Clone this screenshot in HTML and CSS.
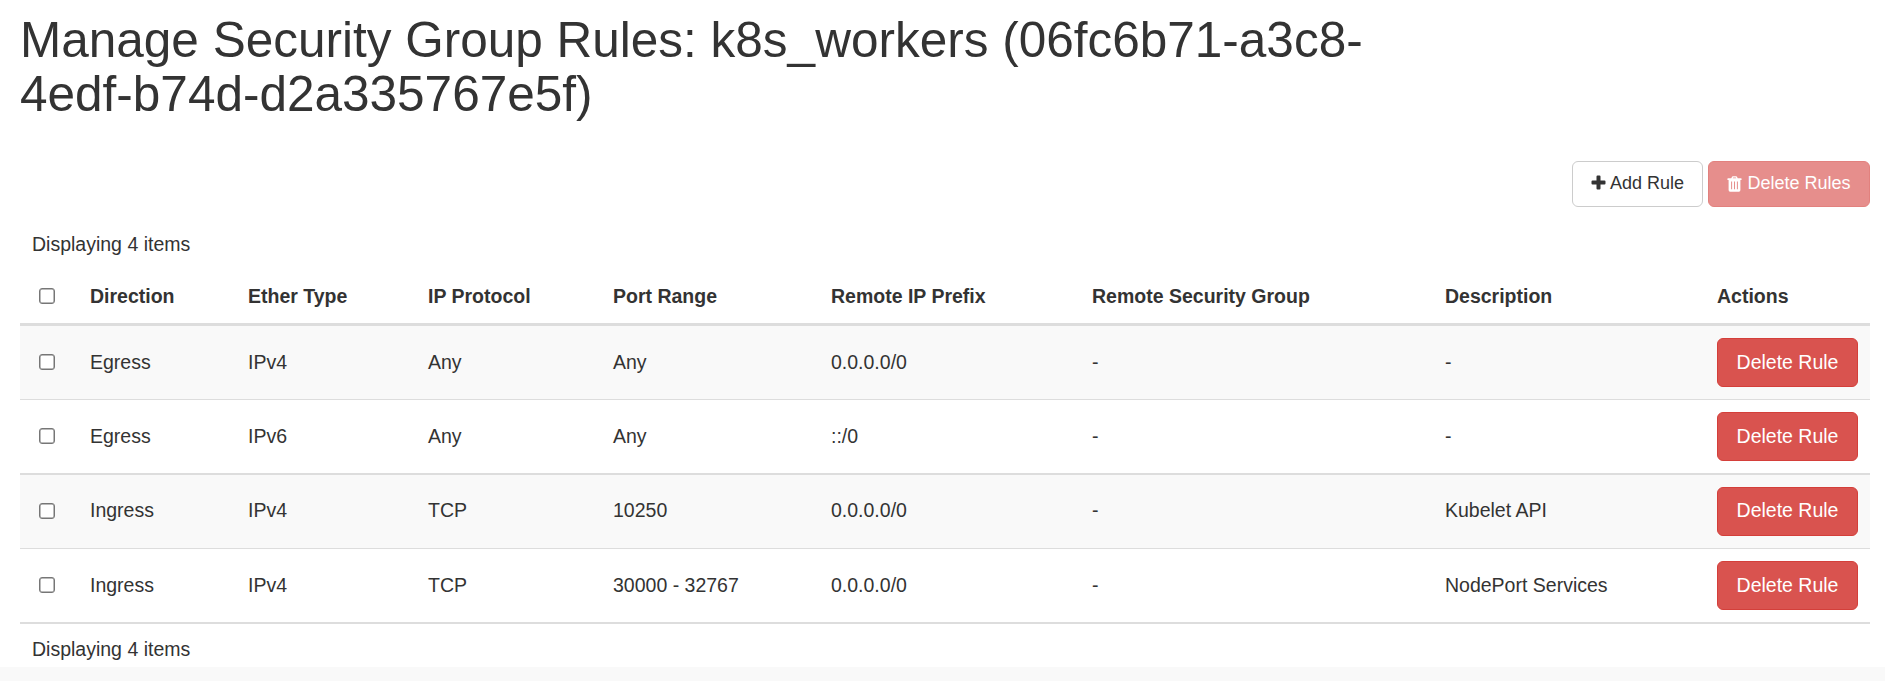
FILE: index.html
```html
<!DOCTYPE html>
<html lang="en">
<head>
<meta charset="utf-8">
<title>Manage Security Group Rules</title>
<link rel="stylesheet" href="styles.css">
</head>
<body>
<main class="page">
  <h1 class="title">Manage Security Group Rules: k8s_workers (06fc6b71-a3c8-<br>4edf-b74d-d2a335767e5f)</h1>
  <div class="toolbar">
    <button class="btn btn-default"><svg class="icon plus" viewBox="0 0 15 15"><path d="M5.500 1.500q0-1 1-1h2q1 0 1 1v4h4q1 0 1 1v2q0 1-1 1h-4v4q0 1-1 1h-2q-1 0-1-1v-4h-4q-1 0-1-1v-2q0-1 1-1h4z" fill="currentColor"/></svg>Add Rule</button>
    <button class="btn btn-danger" disabled><svg class="icon trash" viewBox="0 0 15 16"><path fill="currentColor" fill-rule="evenodd" d="M4.300 2.300 5 .8Q5.200.3 5.800.3h3.400q.6 0 .8.500l.7 1.500H14q.6 0 .6.600v.7q0 .5-.6.500h-.6V14q0 1.700-1.500 1.700H3.100Q1.600 15.700 1.600 14V4.100H1q-.6 0-.6-.5v-.7q0-.6.600-.6zM5.800 2.300h3.400L8.800 1.400H6.200zM4.100 5.500v7.700h1V5.500zM7 5.500v7.700h1V5.500zM9.900 5.500v7.700h1V5.500z"/></svg>Delete Rules</button>
  </div>
  <div class="count count-top">Displaying 4 items</div>
  <table class="rules">
    <colgroup><col class="c-check"><col class="c-dir"><col class="c-ether"><col class="c-proto"><col class="c-port"><col class="c-prefix"><col class="c-group"><col class="c-desc"><col></colgroup>
    <thead>
      <tr><th><input type="checkbox" class="check"></th><th>Direction</th><th>Ether Type</th><th>IP Protocol</th><th>Port Range</th><th>Remote IP Prefix</th><th>Remote Security Group</th><th>Description</th><th>Actions</th></tr>
    </thead>
    <tbody>
      <tr><td><input type="checkbox" class="check"></td><td>Egress</td><td>IPv4</td><td>Any</td><td>Any</td><td>0.0.0.0/0</td><td>-</td><td>-</td><td class="action"><button class="btn btn-row">Delete Rule</button></td></tr>
      <tr><td><input type="checkbox" class="check"></td><td>Egress</td><td>IPv6</td><td>Any</td><td>Any</td><td>::/0</td><td>-</td><td>-</td><td class="action"><button class="btn btn-row">Delete Rule</button></td></tr>
      <tr class="raised"><td class="pick"><input type="checkbox" class="check"></td><td>Ingress</td><td>IPv4</td><td>TCP</td><td>10250</td><td>0.0.0.0/0</td><td>-</td><td>Kubelet API</td><td class="action"><button class="btn btn-row">Delete Rule</button></td></tr>
      <tr><td><input type="checkbox" class="check"></td><td>Ingress</td><td>IPv4</td><td>TCP</td><td>30000 - 32767</td><td>0.0.0.0/0</td><td>-</td><td>NodePort Services</td><td class="action"><button class="btn btn-row">Delete Rule</button></td></tr>
    </tbody>
  </table>
  <div class="count count-bottom">Displaying 4 items</div>
</main>
</body>
</html>
```
FILE: styles.css
```css
* { box-sizing: border-box; }
body {
  margin: 0;
  background: #f9f9f9;
  color: #333;
  font: 19.5px/28px "Liberation Sans", Arial, sans-serif;
}
.page { height: 667px; padding: 13px 15px 0 20px; background: #fff; }
.title { margin: 0; font-size: 49.5px; line-height: 54px; font-weight: 400; white-space: nowrap; }
.toolbar { display: flex; justify-content: flex-end; gap: 5px; margin-top: 40px; }
.btn {
  display: flex;
  align-items: center;
  justify-content: center;
  padding: 0 0 1px;
  border: 1px solid;
  border-radius: 6px;
  font-family: inherit;
}
.btn-default { width: 131px; height: 46px; background: #fff; border-color: #ccc; color: #333; font-size: 18px; }
.btn-danger { width: 162px; height: 46px; background: #d9534f; border-color: #d43f3a; color: #fff; font-size: 18px; opacity: .65; }
.btn-row { width: 141px; height: 49px; background: #d9534f; border-color: #d43f3a; color: #fff; font-size: 19.5px; }
.icon { flex: none; }
.plus { width: 15px; height: 15px; margin: 0 4px 2px 0; }
.trash { width: 15px; height: 16px; margin-right: 5px; }
.count { padding-left: 12px; }
.count-top { margin-top: 23px; height: 35px; }
.count-bottom { margin-top: 11px; }
.rules { width: 1850px; table-layout: fixed; border-collapse: separate; border-spacing: 0; border-bottom: 2px solid #ddd; }
.c-check { width: 58px; }
.c-dir { width: 158px; }
.c-ether { width: 180px; }
.c-proto { width: 185px; }
.c-port { width: 218px; }
.c-prefix { width: 261px; }
.c-group { width: 353px; }
.c-desc { width: 272px; }
.rules th, .rules td { padding: 0 12px; text-align: left; vertical-align: middle; }
.rules th { height: 61px; padding-top: 4px; border-bottom: 3px solid #ddd; font-weight: 700; }
.rules td { height: 74px; padding-bottom: 2px; border-bottom: 1px solid #ddd; }
.rules tbody tr:nth-child(2) td { height: 75px; border-bottom-width: 2px; }
.rules tbody tr:last-child td { height: 73px; border-bottom: 0; }
.rules tbody tr:nth-child(odd) { background: #f9f9f9; }
.rules .raised td { padding-bottom: 4px; }
.rules .raised td.pick { padding-bottom: 2px; }
.rules td.action { padding-top: 12px; padding-bottom: 0; vertical-align: top; }
.raised .btn-row { padding-bottom: 3px; }
.check {
  appearance: none;
  display: block;
  width: 16px;
  height: 16px;
  margin: 0 0 0 7px;
  border: 1px solid #767676;
  border-radius: 3px;
  background: #fff;
  box-shadow: inset 0 0 0 .5px #767676;
}
```
